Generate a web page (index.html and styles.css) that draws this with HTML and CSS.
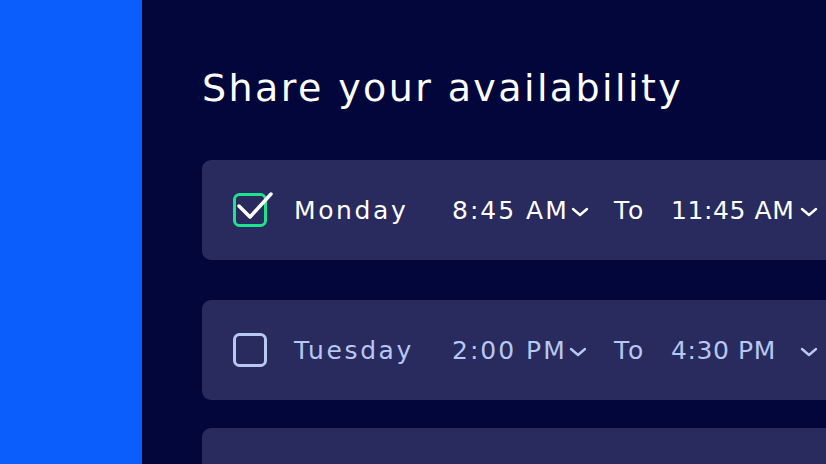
FILE: index.html
```html
<!DOCTYPE html>
<html lang="en">
<head>
  <meta charset="UTF-8">
  <meta name="viewport" content="width=device-width, initial-scale=1.0">
  <title>Share your availability</title>
  <link rel="stylesheet" href="styles.css">
</head>
<body>
  <div class="page">
    <div class="sidebar"></div>

    <div class="main">
      <h1 class="title">Share your availability</h1>

      <!-- Monday -->
      <div class="day-row active">
        <span class="check">
          <svg width="42" height="36" viewBox="0 0 42 36">
            <rect x="2.5" y="2.5" width="31" height="31" rx="5" fill="none" stroke="#1ee38e" stroke-width="3"/>
            <path d="M7 14 L18 25 L39 2" fill="none" stroke="#fff" stroke-width="3.5" stroke-linecap="round" stroke-linejoin="round"/>
          </svg>
        </span>
        <span class="day">Monday</span>
        <span class="start">8:45 AM<svg class="chev" width="18" height="10" viewBox="0 0 18 10"><path d="M2 2 L9 8 L16 2" fill="none" stroke="currentColor" stroke-width="2.4" stroke-linecap="round" stroke-linejoin="round"/></svg></span>
        <span class="to">To</span>
        <span class="end">11:45 AM</span>
        <svg class="chev" width="18" height="10" viewBox="0 0 18 10"><path d="M2 2 L9 8 L16 2" fill="none" stroke="currentColor" stroke-width="2.4" stroke-linecap="round" stroke-linejoin="round"/></svg>
      </div>

      <!-- Tuesday -->
      <div class="day-row">
        <span class="check">
          <svg width="42" height="36" viewBox="0 0 42 36">
            <rect x="2.5" y="2.5" width="31" height="31" rx="5" fill="none" stroke="#b6c8f3" stroke-width="3"/>
          </svg>
        </span>
        <span class="day">Tuesday</span>
        <span class="start">2:00 PM<svg class="chev" width="18" height="10" viewBox="0 0 18 10"><path d="M2 2 L9 8 L16 2" fill="none" stroke="currentColor" stroke-width="2.4" stroke-linecap="round" stroke-linejoin="round"/></svg></span>
        <span class="to">To</span>
        <span class="end">4:30 PM</span>
        <svg class="chev" width="18" height="10" viewBox="0 0 18 10"><path d="M2 2 L9 8 L16 2" fill="none" stroke="currentColor" stroke-width="2.4" stroke-linecap="round" stroke-linejoin="round"/></svg>
      </div>

      <!-- Wednesday (cut off) -->
      <div class="day-row last"></div>
    </div>
  </div>
</body>
</html>
```

FILE: styles.css
```css
html, body {
  margin: 0;
  padding: 0;
  background-color: #03063a;
  overflow: hidden;
}
body {
  font-family: "DejaVu Sans", "Open Sans", sans-serif;
}
.page {
  display: flex;
  width: 826px;
  height: 464px;
  overflow: hidden;
}
.sidebar {
  flex: 0 0 142px;
  background-color: #0c5efc;
}
.main {
  flex: 1;
  padding: 62px 0 0 60px;
  min-width: 0;
}
.title {
  margin: 0 0 46px 0;
  font-size: 38px;
  line-height: 52px;
  font-weight: 400;
  letter-spacing: 2.4px;
  color: #ffffff;
  white-space: nowrap;
}
.day-row {
  display: flex;
  align-items: center;
  width: 700px;
  height: 100px;
  margin-bottom: 40px;
  padding-left: 30px;
  box-sizing: border-box;
  background-color: #292a5d;
  border-radius: 9px;
  color: #b6c8f3;
  font-size: 25px;
  white-space: nowrap;
}
.day-row.active {
  color: #ffffff;
}
.day-row.last {
  margin-top: -12px;
}
.check {
  flex: 0 0 62px;
  display: flex;
  align-items: center;
  height: 36px;
}
.day {
  flex: 0 0 158px;
  letter-spacing: 2.6px;
}
.start {
  flex: 0 0 162px;
  display: flex;
  align-items: center;
  letter-spacing: 2px;
}
.to {
  flex: 0 0 57px;
  letter-spacing: 3px;
}
.end {
  flex: 0 0 127px;
  letter-spacing: 0.6px;
}
.chev {
  display: block;
  margin-left: 2px;
  margin-top: 3px;
}
```
